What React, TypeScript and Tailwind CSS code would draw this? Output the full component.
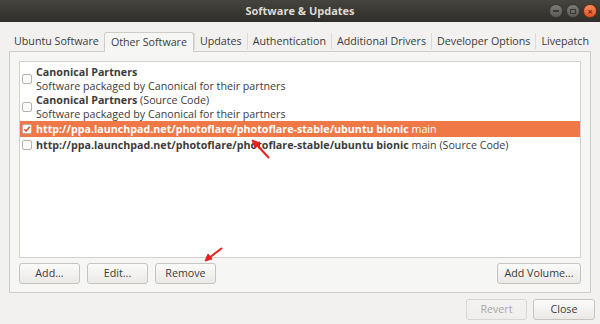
import React from "react";

const TABS = [
  "Ubuntu Software",
  "Other Software",
  "Updates",
  "Authentication",
  "Additional Drivers",
  "Developer Options",
  "Livepatch",
];

const BASE = "ppa.launchpad.net/photoflare/photoflare-stable/ubuntu bionic";

function Checkbox({ checked }: { checked?: boolean }) {
  return (
    <span className="w-[10px] h-[10px] shrink-0 rounded-[2px] border border-[#b6b3ad] bg-[#fbfbfa] flex items-center justify-center">
      {checked && (
        <svg width="8" height="8" viewBox="0 0 8 8">
          <path d="M1.2 4.2 L3.1 6 L6.8 1.8" fill="none" stroke="#d2502a" strokeWidth="1.5" />
        </svg>
      )}
    </span>
  );
}

function Button({ label, w, disabled }: { label: string; w: string; disabled?: boolean }) {
  return (
    <button
      className={`${w} h-[21px] rounded-[3px] border bg-gradient-to-b text-[10.7px] ${
        disabled
          ? "text-[#aaa8a4] from-[#f4f3f2] to-[#efeeec] border-[#d8d6d2]"
          : "text-[#3c3c3c] from-[#fbfbfa] to-[#ebe9e6] border-[#c7c4bf]"
      }`}
    >
      {label}
    </button>
  );
}

export default function App() {
  return (
    <div
      className="w-[600px] h-[324px] bg-[#f2f1f0] relative overflow-hidden text-[#3c3c3c]"
      style={{ fontFamily: '"Open Sans", "DejaVu Sans", sans-serif' }}
    >
      {/* title bar */}
      <div className="h-[22px] bg-gradient-to-b from-[#45443f] to-[#2f2e2a] flex items-center justify-center relative">
        <span className="text-[11px] font-bold text-[#dfdbd2]">Software &amp; Updates</span>
        <div className="absolute right-[3px] top-[4px] flex gap-[3px]">
          <span className="w-[14px] h-[14px] rounded-full bg-gradient-to-b from-[#7c7b76] to-[#5a5955] border border-[#3a3935] flex items-center justify-center">
            <span className="w-[6px] h-[1.5px] bg-[#3a3935]" />
          </span>
          <span className="w-[14px] h-[14px] rounded-full bg-gradient-to-b from-[#7c7b76] to-[#5a5955] border border-[#3a3935] flex items-center justify-center">
            <span className="w-[6px] h-[5px] border border-[#3a3935]" />
          </span>
          <span className="w-[14px] h-[14px] rounded-full bg-gradient-to-b from-[#f58d5e] to-[#e0511f] border border-[#7a2d10] flex items-center justify-center text-[9px] leading-none font-bold text-[#6b2a10]">
            ×
          </span>
        </div>
      </div>

      {/* tabs */}
      <div className="flex items-end h-[29px] pl-[9px] pt-[10px] whitespace-nowrap">
        {TABS.map((t, i) =>
          i === 1 ? (
            <div
              key={t}
              className="h-[20px] px-[6px] flex items-center text-[10.7px] border border-b-0 border-[#cfccc7] rounded-t-[3px] bg-[#f6f6f5] -mb-px relative z-10"
            >
              {t}
            </div>
          ) : (
            <div
              key={t}
              className={`h-[16px] mb-[2px] px-[5px] flex items-center text-[10.7px] ${
                i > 1 ? "border-l border-[#dcdad6]" : ""
              }`}
            >
              {t}
            </div>
          )
        )}
      </div>

      {/* notebook panel */}
      <div className="mx-[9px] h-[242px] border border-[#cfccc7] bg-[#f6f6f5] px-[9px] pt-[9px] flex flex-col">
        <div className="h-[197px] border border-[#d3d0cb] bg-white pt-[3px] text-[10.7px] leading-[14px]">
          <div className="flex items-center gap-[4px] pl-[2px]">
            <Checkbox />
            <div>
              <div className="font-bold">Canonical Partners</div>
              <div>Software packaged by Canonical for their partners</div>
            </div>
          </div>
          <div className="flex items-center gap-[4px] pl-[2px]">
            <Checkbox />
            <div>
              <div>
                <span className="font-bold">Canonical Partners</span> (Source Code)
              </div>
              <div>Software packaged by Canonical for their partners</div>
            </div>
          </div>
          <div className="flex items-center gap-[4px] pl-[2px] h-[16px] bg-[#f07746] text-white">
            <Checkbox checked />
            <div className="whitespace-nowrap">
              <span className="font-bold">http://{BASE}</span> main
            </div>
          </div>
          <div className="flex items-center gap-[4px] pl-[2px] h-[16px]">
            <Checkbox />
            <div className="whitespace-nowrap">
              <span className="font-bold">http://{BASE}</span> main (Source Code)
            </div>
          </div>
        </div>
        <div className="flex mt-[5px] gap-[7px]">
          <Button label="Add..." w="w-[61px]" />
          <Button label="Edit..." w="w-[61px]" />
          <Button label="Remove" w="w-[61px]" />
          <div className="flex-1" />
          <Button label="Add Volume..." w="w-[84px]" />
        </div>
      </div>

      {/* bottom buttons */}
      <div className="flex justify-end gap-[6px] pr-[5px] mt-[6px]">
        <Button label="Revert" w="w-[61px]" disabled />
        <Button label="Close" w="w-[62px]" />
      </div>

      {/* red annotation arrows */}
      <svg className="absolute inset-0 pointer-events-none" width="600" height="324">
        <g stroke="#e5231c" strokeWidth="2" fill="#e5231c">
          <line x1="269" y1="158" x2="256" y2="144" />
          <path d="M252 140 L260 143 L255 148 Z" strokeWidth="1" />
          <line x1="222" y1="248" x2="209" y2="258" />
          <path d="M205 261 L208 254 L212 259 Z" strokeWidth="1" />
        </g>
      </svg>
    </div>
  );
}
